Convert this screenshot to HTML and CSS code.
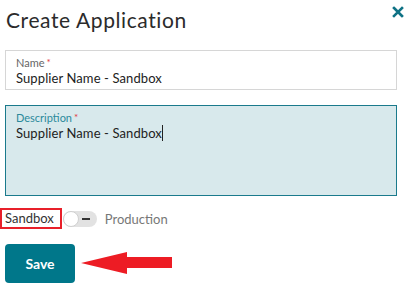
FILE: index.html
```html
<!DOCTYPE html>
<html lang="en">
<head>
  <meta charset="UTF-8" />
  <title>Create Application</title>
  <link rel="stylesheet" href="styles.css">
</head>
<body>
  <div class="modal">
    <header class="modal-head">
      <h1>Create Application</h1>
      <button class="close-btn" aria-label="Close">
        <svg width="12" height="12" viewBox="0 0 12 12">
          <path d="M2 2 L10 10 M10 2 L2 10" stroke="#0f7285" stroke-width="2.6" stroke-linecap="square" />
        </svg>
      </button>
    </header>

    <div class="field">
      <label>Name<span class="req">*</span></label>
      <div class="value">Supplier Name - Sandbox</div>
    </div>

    <div class="field field-active">
      <label>Description<span class="req">*</span></label>
      <div class="value">Supplier Name - Sandbox<span class="caret"></span></div>
    </div>

    <div class="env-row">
      <span class="env-label highlight">Sandbox</span>
      <span class="toggle"><span class="knob"></span><span class="dash"></span></span>
      <span class="env-label muted">Production</span>
    </div>

    <div class="actions">
      <button class="save-btn">Save</button>
      <svg class="arrow" width="92" height="24" viewBox="0 0 92 24">
        <polygon points="0,11 46,0 46,5 91,5 91,16 46,16 46,22" fill="#ed1c24" />
      </svg>
    </div>
  </div>
</body>
</html>
```

FILE: styles.css
```css
body {
  margin: 0;
  background: #fff;
  font-family: Lato, "Liberation Sans", sans-serif;
  color: #333;
}
.modal {
  padding: 0 13px 0 5px;
}
.modal-head {
  display: flex;
  justify-content: space-between;
  align-items: flex-start;
  height: 50px;
}
.modal-head h1 {
  margin: 7px 0 0 1px;
  font-size: 21px;
  font-weight: 400;
  color: #2b2b2b;
  letter-spacing: 0.6px;
}
.close-btn {
  background: none;
  border: none;
  padding: 0;
  margin: 6px -7px 0 0;
  cursor: pointer;
  line-height: 0;
}
.field {
  border: 1px solid #d6d6d6;
  padding: 5px 10px 0;
  height: 33px;
}
.field label {
  display: block;
  font-size: 11px;
  color: #666;
  line-height: 13px;
}
.req {
  color: #e0383e;
  margin-left: 2px;
  font-size: 10px;
  vertical-align: top;
}
.field .value {
  font-size: 13px;
  line-height: 17px;
  color: #222;
  margin-top: 1px;
  letter-spacing: 0.1px;
}
.field-active {
  margin-top: 15px;
  height: 84px;
  border-color: #1a7a8c;
  background: #d8e9ec;
}
.field-active label {
  color: #2b8a9b;
}
.caret {
  display: inline-block;
  width: 1px;
  height: 16px;
  background: #222;
  vertical-align: -3px;
}
.env-row {
  display: flex;
  align-items: center;
  margin: 12px 0 0 -5px;
  height: 21px;
}
.env-label {
  font-size: 13px;
  color: #555;
}
.highlight {
  border: 2px solid #e8202a;
  padding: 0 6px 0 3px;
  line-height: 17px;
  color: #333;
}
.muted {
  color: #777;
  margin-left: 8px;
}
.toggle {
  position: relative;
  width: 34px;
  height: 16px;
  border-radius: 8px;
  background: #e2e2e2;
  margin-left: 1px;
}
.knob {
  position: absolute;
  left: 0;
  top: 0;
  width: 14px;
  height: 14px;
  border: 1px solid #d0d0d0;
  border-radius: 50%;
  background: #fff;
}
.dash {
  position: absolute;
  left: 19px;
  top: 7px;
  width: 8px;
  height: 2px;
  background: #333;
}
.actions {
  display: flex;
  align-items: center;
  margin-top: 15px;
}
.save-btn {
  width: 70px;
  height: 39px;
  border: none;
  border-radius: 4px;
  background: #00778a;
  color: #fff;
  font-family: Lato, "Liberation Sans", sans-serif;
  font-size: 14px;
  font-weight: 700;
  cursor: pointer;
}
.arrow {
  margin-left: 6px;
  margin-top: 1px;
}
```
